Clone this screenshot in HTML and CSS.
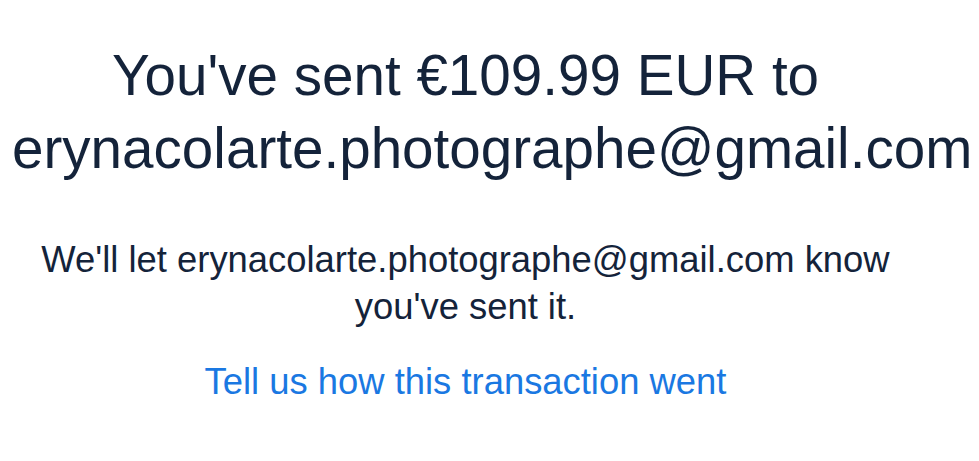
FILE: index.html
```html
<!DOCTYPE html>
<html>
<head>
<meta charset="utf-8">
<link rel="stylesheet" href="styles.css">
</head>
<body>
<main class="done">
  <h1 class="title">You've sent €109.99 EUR to erynacolarte.photographe@gmail.com</h1>
  <p class="note">We'll let erynacolarte.photographe@gmail.com know you've sent it.</p>
  <a class="feedback" href="#">Tell us how this transaction went</a>
</main>
</body>
</html>
```
FILE: styles.css
```css
html, body {
  margin: 0;
  padding: 0;
  background: #ffffff;
}
.done {
  width: 907px;
  margin-left: 12px;
  padding-top: 39px;
  display: flex;
  flex-direction: column;
  align-items: stretch;
  text-align: center;
  font-family: "Liberation Sans", Arial, sans-serif;
  color: #14233a;
}
.title {
  margin: 0;
  font-size: 56.6px;
  font-weight: 400;
  line-height: 73px;
}
.note {
  margin: 51px 0 0;
  font-size: 36.4px;
  line-height: 47px;
}
.feedback {
  margin-top: 28px;
  font-size: 36.4px;
  line-height: 47px;
  color: #1a78e2;
  text-decoration: none;
  align-self: center;
}
```
